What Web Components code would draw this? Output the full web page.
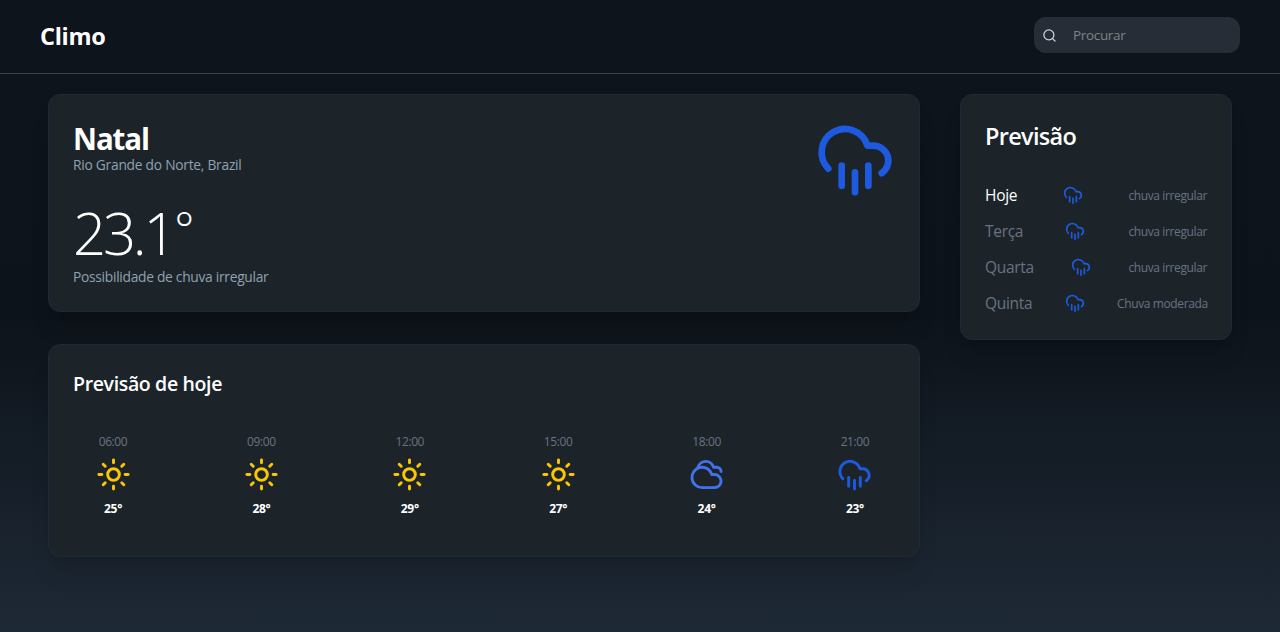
<!DOCTYPE html>
<html lang="pt-BR">
<head>
<meta charset="utf-8">
<title>Climo</title>
<style>
  html, body { margin: 0; }
  body {
    min-height: 632px;
    background: linear-gradient(to bottom, #0d141b 0%, #0d131a 50%, #1e2936 100%);
    font-family: "Open Sans", "Noto Sans", sans-serif;
    color: #fff;
  }
</style>
</head>
<body>
<climo-app></climo-app>
<script>
const ICONS = {
  rain: '<path d="M4 14.899A7 7 0 1 1 15.71 8h1.79a4.5 4.5 0 0 1 2.5 8.242"/><path d="M16 14v6"/><path d="M8 14v6"/><path d="M12 16v6"/>',
  sun: '<circle cx="12" cy="12" r="4"/><path d="M12 2v2"/><path d="M12 20v2"/><path d="m4.93 4.93 1.41 1.41"/><path d="m17.66 17.66 1.41 1.41"/><path d="M2 12h2"/><path d="M20 12h2"/><path d="m6.34 17.66-1.41 1.41"/><path d="m19.07 4.93-1.41 1.41"/>',
  cloudy: '<path d="M17.5 21H9a7 7 0 1 1 6.71-9h1.79a4.5 4.5 0 1 1 0 9Z"/><path d="M22 10a3 3 0 0 0-3-3h-2.207a5.502 5.502 0 0 0-10.702.5"/>',
  search: '<circle cx="11" cy="11" r="8"/><path d="m21 21-4.3-4.3"/>'
};
const COLORS = { rain: '#1d5ae0', sun: '#fdc700', cloudy: '#4371ee', search: '#d1d5db' };

function define(name, render) {
  customElements.define(name, class extends HTMLElement {
    connectedCallback() {
      if (this.shadowRoot) return;
      this.attachShadow({ mode: 'open' }).innerHTML = render(this);
    }
  });
}
const attr = (el, n) => el.getAttribute(n) || '';

define('climo-icon', el => {
  const n = attr(el, 'name'), s = attr(el, 'size');
  return `<style>:host{display:block;flex:none;width:${s}px;height:${s}px}svg{display:block}</style>
  <svg width="${s}" height="${s}" viewBox="0 0 24 24" fill="none" stroke="${COLORS[n]}" stroke-width="2" stroke-linecap="round" stroke-linejoin="round">${ICONS[n]}</svg>`;
});

define('climo-card', () => `<style>
  :host{display:block;box-sizing:border-box;padding:24px;border:1px solid #1e2939;border-radius:12px;background:#1c242a;
    box-shadow:0 20px 25px -5px rgba(0,0,0,.1),0 8px 10px -6px rgba(0,0,0,.1)}
  </style><slot></slot>`);

define('climo-search', () => `<style>
  :host{display:flex;align-items:center;box-sizing:border-box;width:206px;height:36px;padding-left:8px;gap:16px;border-radius:12px;background:#262d36}
  climo-icon{margin-top:1px}
  span{font-size:13.5px;line-height:20px;color:#7e8386;letter-spacing:-.33px}
  </style><climo-icon name="search" size="15"></climo-icon><span>Procurar</span>`);

define('climo-header', () => `<style>
  :host{display:flex;justify-content:space-between;align-items:center;box-sizing:border-box;height:74px;padding:0 40px 4px;border-bottom:1px solid #364153}
  h1{margin:0;padding-top:3px;font-size:23.5px;line-height:32px;font-weight:700;letter-spacing:-.3px}
  </style><h1>Climo</h1><climo-search></climo-search>`);

define('climo-current', () => `<style>
  :host{display:flex;justify-content:space-between;align-items:flex-start;height:168px}
  h2{margin:2px 0 0;font-size:29.5px;line-height:36px;font-weight:700;letter-spacing:-1.1px}
  p{margin:0;font-size:13.8px;line-height:20px;color:#90a1b0;letter-spacing:-.26px}
  .place{margin-top:-2px}
  .temp{display:flex;margin-top:27px;height:62px;font-size:58px;line-height:62px;font-weight:300;letter-spacing:-3.2px;white-space:nowrap}
  .temp .deg{font-size:47px;line-height:54px;margin-left:1px;letter-spacing:0}
  .desc{margin-top:3px;letter-spacing:-.29px}
  </style><div><h2>Natal</h2><p class="place">Rio Grande do Norte, Brazil</p>
  <div class="temp"><span>23.1</span><span class="deg">°</span></div><p class="desc">Possibilidade de chuva irregular</p></div>
  <climo-icon name="rain" size="80"></climo-icon>`);

define('climo-hour', el => `<style>
  :host{display:flex;flex-direction:column;align-items:center;width:80px}
  .t{font-size:12px;line-height:16px;color:#6a7282;letter-spacing:-.4px}
  climo-icon{margin:7px 0 9px}
  b{font-size:12px;line-height:16px;font-weight:700;letter-spacing:-.3px}
  </style><span class="t">${attr(el, 'time')}</span><climo-icon name="${attr(el, 'icon')}" size="35"></climo-icon><b>${attr(el, 'temp')}°</b>`);

define('climo-hourly', () => `<style>
  :host{display:block;height:163px}
  h3{margin:0;padding-top:1px;font-size:19.5px;line-height:28px;font-weight:600;letter-spacing:-.35px}
  div{display:flex;justify-content:space-between;margin-top:36px}
  </style><h3>Previsão de hoje</h3><div>
  <climo-hour time="06:00" icon="sun" temp="25"></climo-hour>
  <climo-hour time="09:00" icon="sun" temp="28"></climo-hour>
  <climo-hour time="12:00" icon="sun" temp="29"></climo-hour>
  <climo-hour time="15:00" icon="sun" temp="27"></climo-hour>
  <climo-hour time="18:00" icon="cloudy" temp="24"></climo-hour>
  <climo-hour time="21:00" icon="rain" temp="23"></climo-hour></div>`);

define('climo-day', el => `<style>
  :host{display:flex;justify-content:space-between;align-items:center;height:24px;color:#6a7282}
  :host([today]) .d{color:#fff}
  span{white-space:nowrap}
  .d{font-size:15.5px;line-height:24px;width:${attr(el, 'w')}px;letter-spacing:-.3px}
  .s{font-size:12px;line-height:16px;padding-top:2px;width:${attr(el, 'sw')}px;text-align:right;letter-spacing:-.38px}
  </style><span class="d">${attr(el, 'day')}</span><climo-icon name="rain" size="20"></climo-icon><span class="s"><slot></slot></span>`);

define('climo-week', () => `<style>
  :host{display:flex;flex-direction:column;gap:12px;height:196px}
  h2{margin:1px 0 19px;font-size:23.5px;line-height:32px;font-weight:600;letter-spacing:-.7px}
  </style><h2>Previsão</h2>
  <climo-day today day="Hoje" w="33" sw="79">chuva irregular</climo-day>
  <climo-day day="Terça" w="37" sw="79">chuva irregular</climo-day>
  <climo-day day="Quarta" w="49" sw="79">chuva irregular</climo-day>
  <climo-day day="Quinta" w="48" sw="90">Chuva moderada</climo-day>`);

define('climo-app', () => `<style>
  :host{display:block}
  main{display:grid;grid-template-columns:872px 272px;column-gap:40px;align-items:start;padding:20px 48px 0}
  .left{display:grid;gap:32px}
  </style><climo-header></climo-header>
  <main><div class="left"><climo-card><climo-current></climo-current></climo-card>
  <climo-card><climo-hourly></climo-hourly></climo-card></div>
  <climo-card><climo-week></climo-week></climo-card></main>`);
</script>
</body>
</html>
